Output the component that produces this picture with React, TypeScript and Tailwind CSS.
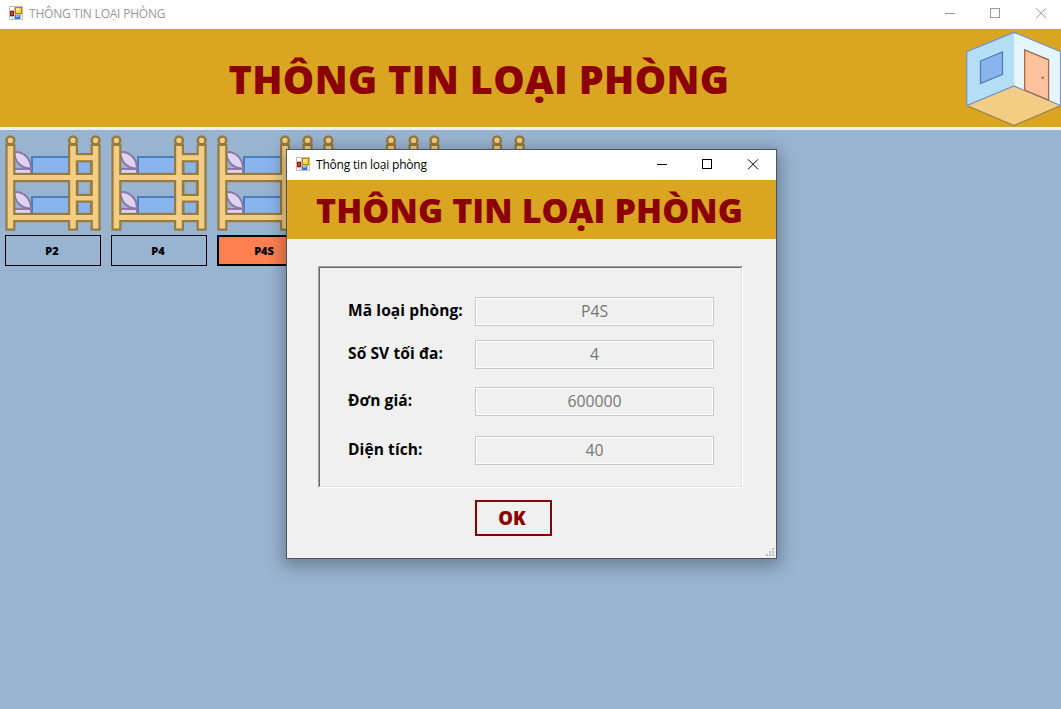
const POST_DARK = '#957b40';
const POST_LIGHT = '#f4cd84';

function FormIcon() {
  return (
    <svg className="block h-[14px] w-[14px] shrink-0" viewBox="0 0 14 14" shapeRendering="crispEdges">
      <rect width="14" height="14" fill="#bfbfbf" />
      <rect x="1" y="1" width="4" height="3" fill="#fff" />
      <rect x="1" y="11" width="2" height="2" fill="#fff" />
      <rect x="4" y="11" width="1" height="2" fill="#fff" />
      <rect x="12" y="9" width="1" height="4" fill="#fff" />
      <rect x="6" y="1" width="7" height="7" fill="#b98400" />
      <rect x="7" y="2" width="5" height="5" fill="#ffd24a" />
      <rect x="7" y="2" width="3" height="3" fill="#ffe994" />
      <rect x="1" y="5" width="4" height="5" fill="#9c1208" />
      <rect x="2" y="6" width="2" height="3" fill="#d8432f" />
      <rect x="6" y="9" width="5" height="4" fill="#3b72d8" />
      <rect x="7" y="9" width="3" height="2" fill="#8db6f5" />
    </svg>
  );
}

function WindowButtons({ className }: { className: string }) {
  return (
    <div className={`flex shrink-0 ${className}`}>
      <svg className="h-[11px] w-[46px]" viewBox="0 0 46 11" fill="none" stroke="currentColor">
        <path d="M18 5.5h10" />
      </svg>
      <svg className="h-[11px] w-[45px]" viewBox="0 0 45 11" fill="none" stroke="currentColor">
        <rect x="17.5" y="0.5" width="9" height="9" />
      </svg>
      <svg className="h-[11px] w-[46px]" viewBox="0 0 46 11" fill="none" stroke="currentColor">
        <path d="M18 .3l10 10M28 .3l-10 10" />
      </svg>
    </div>
  );
}

function Mattress({ y }: { y: number }) {
  return (
    <g transform={`translate(0 ${y})`}>
      <rect x="27" y="23" width="66" height="18" fill="#8ab4ee" stroke="#4a7ebb" strokeWidth="2" />
      <rect x="9" y="35" width="17" height="6" fill="#dfd3f2" stroke="#8d76a8" strokeWidth="2" />
      <path d="M9 18C18 17 26 24 26 34.500C16 34.500 10 28 9 18Z" fill="#dfd3f2" stroke="#8d76a8" strokeWidth="2" />
    </g>
  );
}

const RAILS = [
  [73, 21.2, 16, 5],
  [8, 41, 80, 5],
  [73, 62, 16, 4.5],
  [8, 81, 80, 5],
];
const POSTS = [2.6, 65.2, 87.8];

function BunkBed() {
  return (
    <svg className="block h-[98px] w-[96px]" viewBox="0 0 96 98">
      <Mattress y={0} />
      <Mattress y={40} />
      <g fill={POST_DARK} stroke={POST_DARK} strokeWidth="4.4">
        {POSTS.map((x) => (
          <g key={x}>
            <circle cx={x + 2.8} cy="6.4" r="3" />
            <rect x={x} y="12" width="5.6" height="82.5" />
          </g>
        ))}
        {RAILS.map(([x, y, w, h]) => (
          <rect key={y} x={x} y={y} width={w} height={h} />
        ))}
      </g>
      <path d="M73 29v10M85.300 29v10M73 48.500v11M85.300 48.500v11M73 69v10M85.300 69v10" stroke={POST_DARK} strokeWidth="1" />
      <g fill={POST_LIGHT}>
        {POSTS.map((x) => (
          <g key={x}>
            <circle cx={x + 2.8} cy="6.4" r="2.6" />
            <rect x={x} y="12" width="5.6" height="82.5" />
          </g>
        ))}
        {RAILS.map(([x, y, w, h]) => (
          <rect key={y} x={x - 4} y={y} width={w + 4} height={h} />
        ))}
      </g>
    </svg>
  );
}

function RoomIcon() {
  return (
    <svg className="block h-[98px] w-[96px]" viewBox="965 29 96 98" strokeWidth="1.3">
      <path d="M966.700 51.700L1014 32.300V86L966.700 105.500Z" fill="#b5ddf6" />
      <path d="M1061 51.700L1014 32.300V86L1061 105.500Z" fill="#e5f5fe" />
      <path d="M966.700 105.500L1014 86L1061 105.500L1014 125.500Z" fill={POST_LIGHT} />
      <path d="M966.700 105.500L1014 125.500L1061 105.500" fill="none" stroke="#9c8050" />
      <path d="M966.700 105.500V51.700L1014 32.300L1060.600 51.700V105.500L1014 86Z" fill="none" stroke="#7397c4" />
      <path d="M980.500 61L1002.500 52V74.300L980.500 83.500Z" fill="#8ab4ee" stroke="#4a7ebb" />
      <path d="M1024.700 49.800L1048.600 59.800V100L1024.700 90Z" fill="#ffc29c" stroke="#a5694d" />
      <circle cx="1042.700" cy="77.700" r="1.300" fill="#a5694d" />
    </svg>
  );
}

const ROOMS = [
  { id: 1, label: 'P2' },
  { id: 2, label: 'P4' },
  { id: 3, label: 'P4S', selected: true },
  { id: 4 },
  { id: 5 },
];

const FIELDS = [
  { label: 'Mã loại phòng:', value: 'P4S', gap: 'mt-[29px]' },
  { label: 'Số SV tối đa:', value: '4', gap: 'mt-[14px]' },
  { label: 'Đơn giá:', value: '600000', gap: 'mt-[18px]' },
  { label: 'Diện tích:', value: '40', gap: 'mt-[20px]' },
];

function Dialog() {
  return (
    <div className="absolute left-[286px] top-[149px] flex h-[410px] w-[491px] flex-col border border-[#4b555f] bg-[#f0f0f0] shadow-[0_4px_16px_3px_rgba(0,0,0,0.3)]">
      <div className="flex h-[30px] shrink-0 items-center bg-white pb-[2px] pl-[9px]">
        <FormIcon />
        <span className="ml-[6px] flex-1 whitespace-nowrap pt-[2px] text-[12px] leading-none tracking-[-0.2px] text-black">
          Thông tin loại phòng
        </span>
        <WindowButtons className="text-black" />
      </div>
      <div className="flex h-[59px] shrink-0 items-center bg-[#daa520] pl-[29px]">
        <h2 className="whitespace-nowrap text-[34px] font-extrabold leading-none tracking-[0.1px] text-[#8b0000]">THÔNG TIN LOẠI PHÒNG</h2>
      </div>
      <div className="ml-[31px] mt-[27px] h-[222px] w-[425px] shrink-0 border border-b-white border-l-[#a0a0a0] border-r-white border-t-[#a0a0a0]">
        <div className="h-full border border-b-[#e3e3e3] border-l-[#696969] border-r-[#e3e3e3] border-t-[#696969]">
          {FIELDS.map((f) => (
            <div key={f.label} className={`flex h-[29px] items-center pl-[28px] ${f.gap}`}>
              <label className="w-[127px] shrink-0 whitespace-nowrap pb-px text-[15.5px] font-bold leading-none tracking-[0.1px] text-black">
                {f.label}
              </label>
              <div className="flex h-[29px] w-[239px] items-center justify-center border border-[#c8c8c8] text-[15.8px] leading-none text-[#777] shadow-[inset_0_0_0_1px_white]">
                {f.value}
              </div>
            </div>
          ))}
        </div>
      </div>
      <button className="ml-[188px] mt-[12px] flex h-[36px] w-[77px] shrink-0 items-center justify-center border-2 border-[#8b0000] pr-[3px] text-[18.5px] font-extrabold leading-none text-[#8b0000]">
        OK
      </button>
      <svg className="ml-auto mr-[2px] mt-auto mb-[2px] block h-[8px] w-[8px]" viewBox="0 0 8 8" fill="#bfbfbf" shapeRendering="crispEdges">
        <path d="M6 0h2v2h-2zM3 3h2v2h-2zM6 3h2v2h-2zM0 6h2v2h-2zM3 6h2v2h-2zM6 6h2v2h-2z" />
      </svg>
    </div>
  );
}

export default function App() {
  return (
    <div className="relative flex h-[709px] w-[1061px] flex-col overflow-hidden bg-[#99b4d1] font-['Open_Sans','Noto_Sans',sans-serif]">
      <div className="flex h-[29px] shrink-0 items-center bg-white pb-[3px] pl-[9px]">
        <FormIcon />
        <span className="ml-[6px] flex-1 whitespace-nowrap pt-[2px] text-[12px] leading-none tracking-[-0.22px] text-[#999]">
          THÔNG TIN LOẠI PHÒNG
        </span>
        <WindowButtons className="-mr-[3px] text-[#999]" />
      </div>
      <header className="flex h-[101px] shrink-0 items-center justify-between border-b-[3px] border-[#f0f0f0] bg-[#daa520] pl-[228.5px]">
        <h1 className="whitespace-nowrap pt-[4px] text-[39.5px] font-extrabold leading-none tracking-[0.35px] text-[#8b0000]">THÔNG TIN LOẠI PHÒNG</h1>
        <RoomIcon />
      </header>
      <main className="flex gap-[10px] pl-[5px] pt-[4px]">
        {ROOMS.map((r) => (
          <div key={r.id} className="w-[96px] shrink-0">
            <BunkBed />
            <div
              className={`mt-[3px] flex h-[31px] items-center justify-center pr-[2px] text-[11px] font-extrabold leading-none text-black ${
                r.selected ? 'border-2 border-black bg-[#ff7f50]' : 'border border-black'
              }`}
            >
              {r.label}
            </div>
          </div>
        ))}
      </main>
      <Dialog />
    </div>
  );
}
